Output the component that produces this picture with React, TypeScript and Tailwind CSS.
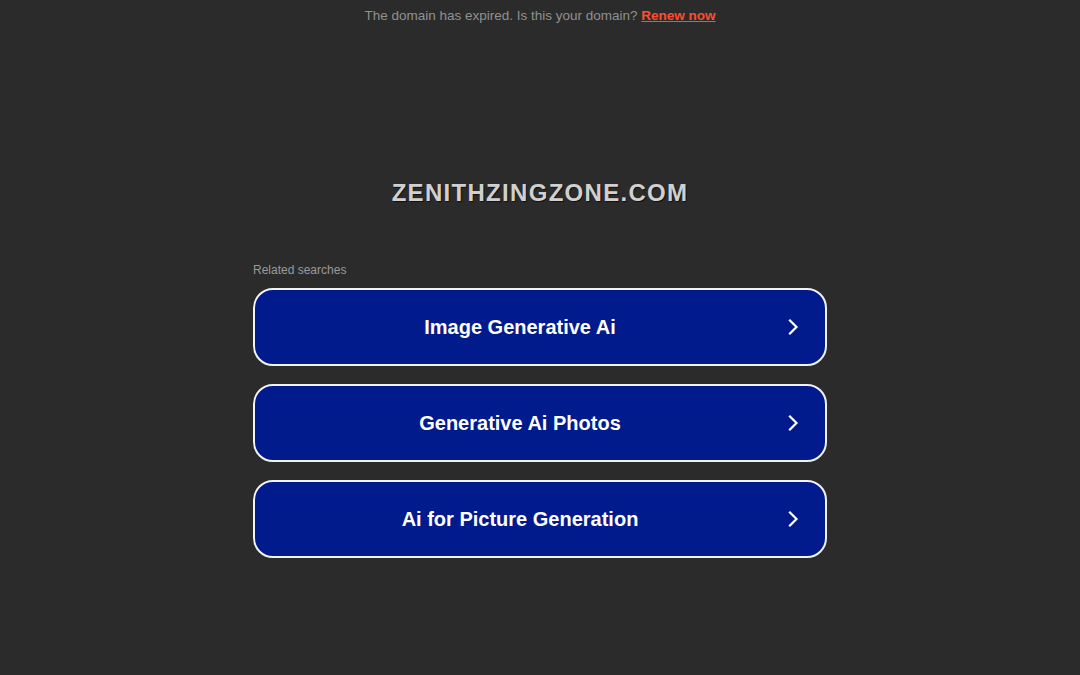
const searches = ['Image Generative Ai', 'Generative Ai Photos', 'Ai for Picture Generation'];

function Chevron() {
  return (
    <svg width="12" height="18" viewBox="0 0 12 18" fill="none" className="absolute right-[26px] top-1/2 -translate-y-1/2">
      <path d="M3 2.5 L9.5 9 L3 15.5" stroke="white" strokeWidth="2.2" strokeLinecap="square" />
    </svg>
  );
}

export default function App() {
  return (
    <div className="min-h-[675px] w-full bg-[#2b2b2b] font-['Liberation_Sans',Arial,sans-serif]">
      <div className="pt-[7px] text-center text-[13.5px] leading-[18px] text-[#919191]">
        The domain has expired. Is this your domain?{' '}
        <a href="#" className="font-bold text-[#ff4d2e] underline">Renew now</a>
      </div>

      <h1 className="mt-[154px] text-center text-[24px] font-bold leading-[28px] tracking-[1.3px] text-[#d0d0d0] [text-shadow:1px_1px_1px_rgba(0,0,0,0.6)]">
        ZENITHZINGZONE.COM
      </h1>

      <div className="mx-auto mt-[56px] w-[574px]">
        <div className="mb-[11px] text-[12px] leading-[14px] text-[#9a9a9a]">Related searches</div>
        <div className="flex flex-col gap-[18px]">
          {searches.map((s) => (
            <a
              key={s}
              href="#"
              className="relative flex h-[78px] items-center justify-center rounded-[20px] border-2 border-[#f2f2f2] bg-[#011a8c] pr-[40px] text-[20px] font-bold text-white"
            >
              {s}
              <Chevron />
            </a>
          ))}
        </div>
      </div>
    </div>
  );
}
